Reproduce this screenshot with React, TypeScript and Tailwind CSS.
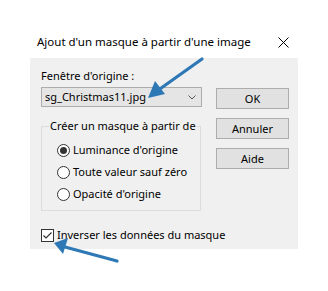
import React from 'react';

// Boîte de dialogue "Ajout d'un masque à partir d'une image"
const Radio = ({ label, checked }: { label: string; checked?: boolean }) => (
  <div className="flex items-center h-[22px]">
    <div className="w-[13px] h-[13px] rounded-full border border-[#333333] bg-white flex items-center justify-center">
      {checked && <div className="w-[7px] h-[7px] rounded-full bg-[#333333]" />}
    </div>
    <span className="ml-[3px] leading-[16px] whitespace-nowrap">{label}</span>
  </div>
);

const Button = ({ label }: { label: string }) => (
  <div className="w-[73px] h-[21px] border border-[#adadad] bg-[#e1e1e1] flex items-center justify-center leading-[16px]">
    {label}
  </div>
);

export default function App() {
  return (
    <div className="relative w-[328px] h-[291px] bg-white text-[11px] text-black font-['Segoe_UI','Noto_Sans',sans-serif]">
      <div className="h-[58px] flex items-start justify-between pt-[33px] pl-[37px] pr-[39px]">
        <span className="text-[11.5px] leading-[18px] whitespace-nowrap">Ajout d'un masque à partir d'une image</span>
        <svg width="11" height="11" viewBox="0 0 11 11" className="mt-[4px]">
          <path d="M0.5 0.5 L10.5 10.5 M10.5 0.5 L0.5 10.5" stroke="#000" strokeWidth="1" />
        </svg>
      </div>

      <div className="ml-[30px] w-[268px] h-[191px] bg-[#f0f0f0] pt-[10px] pl-[11px] flex gap-[14px]">
        <div className="w-[161px] flex flex-col">
          <div className="leading-[16px] whitespace-nowrap">Fenêtre d'origine :</div>
          <div className="mt-[3px] h-[20px] border border-[#adadad] bg-[#e5e5e5] flex items-center justify-between pl-[3px] pr-[5px]">
            <span className="leading-[16px] whitespace-nowrap">sg_Christmas11.jpg</span>
            <svg width="8" height="5" viewBox="0 0 8 5">
              <path d="M0.5 0.5 L4 4 L7.5 0.5" stroke="#555" strokeWidth="1" fill="none" />
            </svg>
          </div>

          <div className="relative mt-[19px] h-[85px] w-[160px] border border-[#dcdcdc] pt-[12px] pl-[15px]">
            <span className="absolute -top-[9px] left-[7px] px-[1px] bg-[#f0f0f0] leading-[16px] whitespace-nowrap">
              Créer un masque à partir de
            </span>
            <Radio label="Luminance d'origine" checked />
            <Radio label="Toute valeur sauf zéro" />
            <Radio label="Opacité d'origine" />
          </div>

          <div className="mt-[16px] flex items-center h-[16px]">
            <div className="w-[13px] h-[13px] border border-[#333333] bg-white flex items-center justify-center">
              <svg width="11" height="11" viewBox="0 0 11 11">
                <path d="M1.5 5.5 L4 8 L9.5 2.5" stroke="#333" strokeWidth="1.2" fill="none" />
              </svg>
            </div>
            <span className="ml-[3px] leading-[16px] whitespace-nowrap">Inverser les données du masque</span>
          </div>
        </div>

        <div className="mt-[20px] flex flex-col gap-[9px]">
          <Button label="OK" />
          <Button label="Annuler" />
          <Button label="Aide" />
        </div>
      </div>

      <svg className="absolute inset-0 pointer-events-none" width="328" height="291" viewBox="0 0 328 291">
        <line x1="202" y1="59" x2="157" y2="91" stroke="#2e78b6" strokeWidth="3.2" strokeLinecap="round" />
        <polygon points="148,98 155,81 165,94" fill="#2e78b6" />
        <line x1="117" y1="261" x2="65" y2="247" stroke="#2e78b6" strokeWidth="3.2" strokeLinecap="round" />
        <polygon points="54,243 68,238 63,254" fill="#2e78b6" />
      </svg>
    </div>
  );
}
